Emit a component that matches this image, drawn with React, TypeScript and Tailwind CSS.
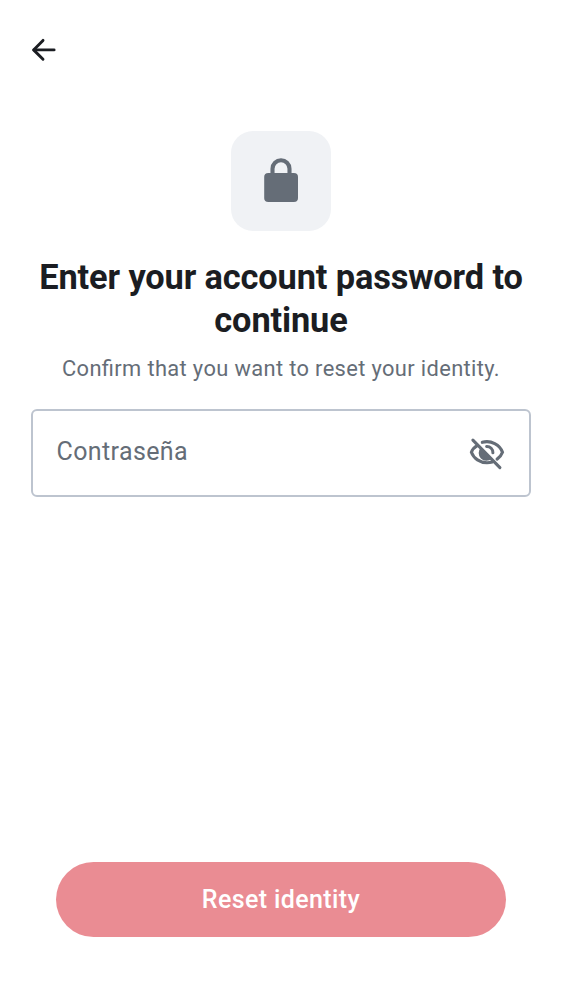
function BackIcon() {
  return (
    <svg width="28" height="26" viewBox="0 0 28 26" fill="none" stroke="#1b1d22" strokeWidth="2.9" strokeLinecap="round" strokeLinejoin="round">
      <path d="M13 3.4 3.6 12.9l9.4 9.4" />
      <path d="M4 12.9h20.1" />
    </svg>
  );
}

function LockIcon() {
  return (
    <svg width="50" height="50" viewBox="0 0 50 50">
      <path d="M16.5 18v-5.2a8.5 8.5 0 0 1 17 0V18" fill="none" stroke="#656d77" strokeWidth="4.1" />
      <rect x="8.2" y="17" width="33.8" height="29" rx="4.1" fill="#656d77" />
    </svg>
  );
}

function HiddenIcon() {
  return (
    <svg width="38" height="38" viewBox="0 0 38 38" fill="none" stroke="#656d77" strokeWidth="3.1" strokeLinecap="round">
      <path d="M9.2 11.7C6.7 13.1 4.4 15.4 3.4 18.3 5.8 24.7 12 28.7 19 28.7c1.9 0 3.6-.2 5.3-.7" />
      <path d="M14.3 8.3C23 6 32 10.6 34.5 18.3c-.9 2.5-2.7 5-5.4 6.8" />
      <path d="M18.6 12.4a6 6 0 0 1 6.3 6.4" strokeWidth="3" />
      <path d="M13 13.5a7.6 7.6 0 0 0 10.8 11Z" fill="#656d77" stroke="none" />
      <path d="m4.9 6.2 27 27.5" />
    </svg>
  );
}

export default function App() {
  return (
    <main className="flex h-[1000px] w-[562px] flex-col bg-white font-['Roboto',sans-serif] text-[#1b1d22]">
      <header className="flex h-[100px] shrink-0 items-center pl-[30px]">
        <button aria-label="Back"><BackIcon /></button>
      </header>
      <section className="flex flex-col items-center pt-[31px] text-center">
        <div className="flex size-[100px] items-center justify-center rounded-[22px] bg-[#f0f2f5]"><LockIcon /></div>
        <h1 className="mt-[25px] text-[34.375px] leading-[43px] font-bold tracking-[-0.13px]">Enter your account password to<br />continue</h1>
        <p className="mt-[11.4px] text-[21.875px] leading-[31px] tracking-[0.36px] text-[#656d77] [font-feature-settings:'liga']">Confirm that you want to reset your identity.</p>
      </section>
      <label className="mx-[31px] mt-[25px] flex h-[88px] items-center justify-between rounded-[6px] border-2 border-[#bdc4cf] pr-[23px] pl-[23.5px]">
        <span className="pb-[2px] text-[25px] leading-[38px] tracking-[0.38px] text-[#656d77]">Contraseña</span>
        <HiddenIcon />
      </label>
      <button className="mx-[56px] mt-auto mb-[63px] h-[75px] rounded-full bg-[#ea8c93] pt-[1px] text-[25px] font-medium tracking-[0.39px] text-white">Reset identity</button>
    </main>
  );
}
